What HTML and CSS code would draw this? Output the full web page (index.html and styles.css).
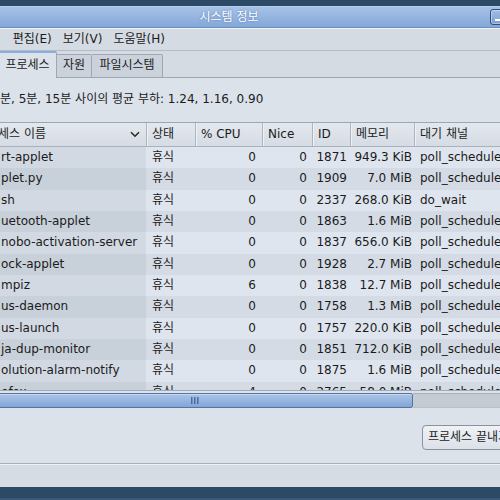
FILE: index.html
```html
<!DOCTYPE html>
<html lang="ko">
<head>
<meta charset="utf-8">
<title>시스템 정보</title>
<link rel="stylesheet" href="styles.css">
</head>
<body>
<div class="win">
  <div class="strip-top"></div>
  <div class="titlebar">
    <div class="title">시스템 정보</div>
    <div class="wbtn"><span class="wbtn-line"></span></div>
  </div>
  <div class="menubar">
    <span class="mi cut">)</span>
    <span class="mi">편집(E)</span>
    <span class="mi">보기(V)</span>
    <span class="mi">도움말(H)</span>
  </div>
  <div class="tabs">
    <div class="tab active">프로세스</div>
    <div class="tab t2">자원</div>
    <div class="tab t3">파일시스템</div>
    <div class="tab-fill"></div>
  </div>
  <div class="content">
    <div class="load">분, 5분, 15분 사이의 평균 부하: 1.24, 1.16, 0.90</div>
    <div class="tree">
      <div class="thead">
        <div class="th th-name"><span class="cutk">세스 이름</span><svg class="sort" width="10" height="7" viewBox="0 0 10 7"><path d="M1 1.2 L5 5.2 L9 1.2" fill="none" stroke="#2a2a2a" stroke-width="1.6"/></svg></div>
        <div class="th">상태</div>
        <div class="th">% CPU</div>
        <div class="th">Nice</div>
        <div class="th">ID</div>
        <div class="th">메모리</div>
        <div class="th">대기 채널</div>
      </div>
      <div class="tbody">
        <div class="row"><div class="c c-name">rt-applet</div><div class="c c-stat">휴식</div><div class="c c-cpu">0</div><div class="c c-nice">0</div><div class="c c-id">1871</div><div class="c c-mem">949.3 KiB</div><div class="c c-wchan">poll_schedule_timeout</div></div>
        <div class="row"><div class="c c-name">plet.py</div><div class="c c-stat">휴식</div><div class="c c-cpu">0</div><div class="c c-nice">0</div><div class="c c-id">1909</div><div class="c c-mem">7.0 MiB</div><div class="c c-wchan">poll_schedule_timeout</div></div>
        <div class="row"><div class="c c-name">sh</div><div class="c c-stat">휴식</div><div class="c c-cpu">0</div><div class="c c-nice">0</div><div class="c c-id">2337</div><div class="c c-mem">268.0 KiB</div><div class="c c-wchan">do_wait</div></div>
        <div class="row"><div class="c c-name">uetooth-applet</div><div class="c c-stat">휴식</div><div class="c c-cpu">0</div><div class="c c-nice">0</div><div class="c c-id">1863</div><div class="c c-mem">1.6 MiB</div><div class="c c-wchan">poll_schedule_timeout</div></div>
        <div class="row"><div class="c c-name">nobo-activation-server</div><div class="c c-stat">휴식</div><div class="c c-cpu">0</div><div class="c c-nice">0</div><div class="c c-id">1837</div><div class="c c-mem">656.0 KiB</div><div class="c c-wchan">poll_schedule_timeout</div></div>
        <div class="row"><div class="c c-name">ock-applet</div><div class="c c-stat">휴식</div><div class="c c-cpu">0</div><div class="c c-nice">0</div><div class="c c-id">1928</div><div class="c c-mem">2.7 MiB</div><div class="c c-wchan">poll_schedule_timeout</div></div>
        <div class="row"><div class="c c-name">mpiz</div><div class="c c-stat">휴식</div><div class="c c-cpu">6</div><div class="c c-nice">0</div><div class="c c-id">1838</div><div class="c c-mem">12.7 MiB</div><div class="c c-wchan">poll_schedule_timeout</div></div>
        <div class="row"><div class="c c-name">us-daemon</div><div class="c c-stat">휴식</div><div class="c c-cpu">0</div><div class="c c-nice">0</div><div class="c c-id">1758</div><div class="c c-mem">1.3 MiB</div><div class="c c-wchan">poll_schedule_timeout</div></div>
        <div class="row"><div class="c c-name">us-launch</div><div class="c c-stat">휴식</div><div class="c c-cpu">0</div><div class="c c-nice">0</div><div class="c c-id">1757</div><div class="c c-mem">220.0 KiB</div><div class="c c-wchan">poll_schedule_timeout</div></div>
        <div class="row"><div class="c c-name">ja-dup-monitor</div><div class="c c-stat">휴식</div><div class="c c-cpu">0</div><div class="c c-nice">0</div><div class="c c-id">1851</div><div class="c c-mem">712.0 KiB</div><div class="c c-wchan">poll_schedule_timeout</div></div>
        <div class="row"><div class="c c-name">olution-alarm-notify</div><div class="c c-stat">휴식</div><div class="c c-cpu">0</div><div class="c c-nice">0</div><div class="c c-id">1875</div><div class="c c-mem">1.6 MiB</div><div class="c c-wchan">poll_schedule_timeout</div></div>
        <div class="row"><div class="c c-name">efox</div><div class="c c-stat">휴식</div><div class="c c-cpu">4</div><div class="c c-nice">0</div><div class="c c-id">2765</div><div class="c c-mem">58.0 MiB</div><div class="c c-wchan">poll_schedule_timeout</div></div>
      </div>
      <div class="hscroll">
        <div class="thumb"><svg width="8" height="7" viewBox="0 0 8 7"><rect x="0" y="0" width="1.5" height="7" fill="#4d6d9c"/><rect x="3" y="0" width="1.5" height="7" fill="#4d6d9c"/><rect x="6" y="0" width="1.5" height="7" fill="#4d6d9c"/></svg></div>
        <div class="trough"></div>
      </div>
    </div>
    <div class="actions"><button class="btn">프로세스 끝내기</button></div>
  </div>
  <div class="status"></div>
  <div class="strip-bottom"></div>
</div>
</body>
</html>
```

FILE: styles.css
```css
html, body {
  margin: 0;
  padding: 0;
}
body {
  width: 500px;
  height: 500px;
  overflow: hidden;
  font-family: "DejaVu Sans", "Noto Sans CJK KR", sans-serif;
  font-size: 12px;
  color: #1b1b1b;
}
.win {
  display: flex;
  flex-direction: column;
  width: 500px;
  height: 500px;
  overflow: hidden;
}
.strip-top {
  height: 6px;
  flex-shrink: 0;
  background: #2c4a65;
}
.titlebar {
  height: 22px;
  flex-shrink: 0;
  box-sizing: border-box;
  display: flex;
  align-items: center;
  background: linear-gradient(#a6c2e7, #84a7d8);
  border-top: 1px solid #b3cdee;
  border-bottom: 1px solid #6c8fc3;
  overflow: hidden;
}
.title {
  flex: 1;
  text-align: center;
  padding-right: 32px;
  color: #fff;
  font-size: 12px;
  line-height: 14px;
  text-shadow: 0 0 2px #4f73a8;
}
.wbtn {
  flex-shrink: 0;
  width: 18px;
  height: 16px;
  margin-right: -8px;
  box-sizing: border-box;
  border: 1px solid #34507a;
  border-radius: 3px;
  background: linear-gradient(#a1bee6, #7c9fd2);
  box-shadow: inset 0 0 0 1px rgba(255, 255, 255, 0.35);
  display: flex;
  align-items: flex-end;
  justify-content: center;
  padding-bottom: 3px;
}
.wbtn-line {
  width: 9px;
  height: 2px;
  background: #fff;
}
.menubar {
  height: 23px;
  flex-shrink: 0;
  box-sizing: border-box;
  border-top: 1px solid #f1f4f7;
  border-bottom: 1px solid #b4bbc4;
  background: #d5dbe3;
  display: flex;
  align-items: center;
  line-height: 15px;
  white-space: nowrap;
}
.mi {
  margin-right: 11px;
}
.mi.cut {
  margin-left: -4px;
  margin-right: 12px;
}
.tabs {
  height: 27px;
  flex-shrink: 0;
  display: flex;
  align-items: flex-end;
  background: #d5dbe3;
}
.tab {
  height: 24px;
  box-sizing: border-box;
  border: 1px solid #9fa7b0;
  border-left: none;
  border-radius: 0 2px 0 0;
  background: #cbd2db;
  text-align: center;
  line-height: 21px;
  white-space: nowrap;
  flex-shrink: 0;
}
.tab.active {
  height: 27px;
  width: 59px;
  margin-left: -2px;
  border-left: 1px solid #9fa7b0;
  border-top: 2px solid #8aaddc;
  border-bottom: none;
  border-radius: 2px 2px 0 0;
  background: #dce2ea;
  line-height: 25px;
}
.tab.t2 {
  width: 35px;
}
.tab.t3 {
  width: 71px;
}
.tab-fill {
  flex: 1;
  height: 1px;
  background: #9fa7b0;
}
.content {
  flex: 1;
  min-height: 0;
  background: #dce2ea;
  display: flex;
  flex-direction: column;
}
.load {
  padding-top: 14px;
  line-height: 15px;
  white-space: nowrap;
}
.tree {
  margin-top: 15px;
  border-top: 1px solid #9ea6b0;
}
.thead,
.row {
  display: grid;
  grid-template-columns: 146px 49px 67px 50px 38px 64px 1fr;
}
.thead {
  height: 24px;
  box-sizing: border-box;
  border-bottom: 1px solid #aab1ba;
  background: linear-gradient(#e3e8ee, #d6dce4);
}
.th {
  display: flex;
  align-items: center;
  padding-left: 5px;
  border-left: 1px solid #aeb5be;
  box-shadow: inset 1px 0 #eef1f5;
  white-space: nowrap;
  overflow: hidden;
  line-height: 15px;
}
.th-name {
  border-left: none;
  box-shadow: none;
  padding-left: 0;
  padding-right: 6px;
  justify-content: space-between;
}
.cutk {
  margin-left: -2px;
}
.tbody {
  height: 243px;
  overflow: hidden;
  border-bottom: 1px solid #a3aab4;
}
.row {
  height: 21.33px;
  line-height: 21.33px;
}
.row:nth-child(odd) {
  background: #dfe5ee;
}
.row:nth-child(even) {
  background: #d4dbe5;
}
.row:nth-child(odd) .c-name {
  background: #d2d9e3;
}
.row:nth-child(even) .c-name {
  background: #c8d0da;
}
.c {
  white-space: nowrap;
  overflow: hidden;
}
.c-name {
  padding-left: 1px;
}
.c-stat {
  padding-left: 6px;
}
.c-cpu {
  text-align: right;
  padding-right: 6px;
}
.c-nice {
  text-align: right;
  padding-right: 5px;
}
.c-id {
  text-align: right;
  padding-right: 3px;
}
.c-mem {
  text-align: right;
  padding-right: 2px;
}
.c-wchan {
  padding-left: 6px;
}
.hscroll {
  margin-top: 2px;
  height: 15px;
  display: flex;
}
.thumb {
  width: 437px;
  margin-left: -24px;
  flex-shrink: 0;
  box-sizing: border-box;
  border: 1px solid #55749f;
  border-radius: 2px;
  background: linear-gradient(#aac4e8, #82a5d7);
  box-shadow: inset 0 1px rgba(255, 255, 255, 0.35);
  display: flex;
  align-items: center;
  justify-content: center;
}
.trough {
  flex: 1;
  box-sizing: border-box;
  background: #c5cbd3;
  border-top: 1px solid #a9b0b9;
  border-bottom: 1px solid #b9c0c8;
}
.actions {
  margin-top: 17px;
  margin-right: -22px;
  display: flex;
  justify-content: flex-end;
}
.btn {
  width: 100px;
  height: 25px;
  box-sizing: border-box;
  border: 1px solid #8a929c;
  border-radius: 4px;
  background: linear-gradient(#eff2f6, #dce1e8);
  font: inherit;
  color: #1b1b1b;
  text-align: left;
  padding: 0 0 0 5px;
  white-space: nowrap;
  overflow: hidden;
  line-height: 15px;
}
.status {
  height: 24px;
  flex-shrink: 0;
  box-sizing: border-box;
  border-top: 1px solid #a8afb8;
  background: #d6dce4;
  box-shadow: inset 0 1px #eef1f5;
}
.strip-bottom {
  height: 13px;
  flex-shrink: 0;
  box-sizing: border-box;
  background: #2c4a65;
  border-bottom: 2px solid #3b5876;
}
```
